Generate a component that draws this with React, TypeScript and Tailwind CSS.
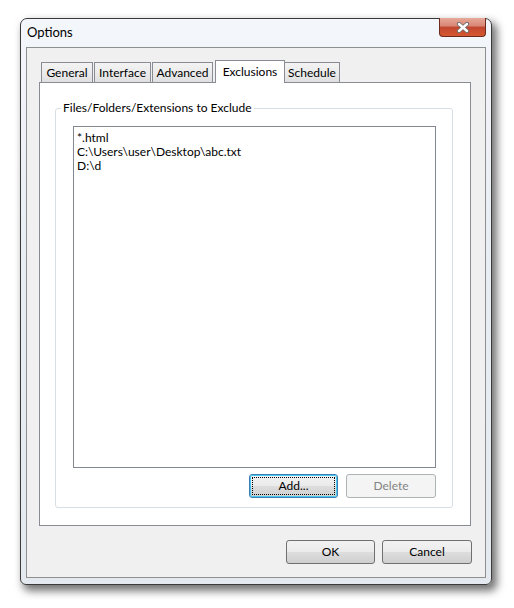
import React from "react";

const font = "font-['Lato','Liberation_Sans',sans-serif]";

const tabs = [
  { label: "General", w: "w-[52px]" },
  { label: "Interface", w: "w-[57px]" },
  { label: "Advanced", w: "w-[61px]" },
  { label: "Exclusions", w: "w-[70px]", active: true },
  { label: "Schedule", w: "w-[56px]" },
];

const files = ["*.html", "C:\\Users\\user\\Desktop\\abc.txt", "D:\\d"];

// vista style push button
const Button = ({
  label,
  w,
  focused,
  disabled,
}: {
  label: string;
  w: string;
  focused?: boolean;
  disabled?: boolean;
}) => {
  if (disabled) {
    return (
      <div
        className={`${w} h-[24px] flex items-center justify-center rounded-[3px] border border-[#adb2b5] bg-[#f4f4f4] text-[12px] text-[#838383]`}
      >
        {label}
      </div>
    );
  }
  return (
    <div
      className={`${w} h-[24px] relative flex items-center justify-center rounded-[3px] border ${
        focused ? "border-[#3c7fb1]" : "border-[#707070]"
      } bg-[linear-gradient(to_bottom,#f2f2f2_0%,#ebebeb_48%,#dddddd_52%,#cfcfcf_100%)] text-[12px] text-black`}
    >
      {focused && (
        <>
          <span className="absolute inset-0 rounded-[2px] border border-[#48c8f0]" />
          <span className="absolute inset-[2px] border border-dotted border-black" />
        </>
      )}
      <span className="relative">{label}</span>
    </div>
  );
};

const CloseGlyph = () => (
  <svg width="14" height="11" viewBox="0 0 14 11">
    <path d="M3 2 L11 9 M11 2 L3 9" stroke="#6b6b6b" strokeWidth="4.2" strokeLinecap="round" />
    <path d="M3 2 L11 9 M11 2 L3 9" stroke="#ffffff" strokeWidth="2.4" strokeLinecap="round" />
  </svg>
);

export default function App() {
  return (
    <div className={`w-[514px] h-[608px] bg-white pt-[18px] pl-[20px] ${font}`}>
      {/* window frame */}
      <div className="relative w-[472px] h-[567px] rounded-t-[7px] rounded-b-[6px] border border-[#3a3a3a] bg-[linear-gradient(to_bottom,#f3f6fa_0%,#e9eef4_40%,#e3e9ef_100%)] shadow-[4px_5px_9px_1px_rgba(0,0,0,0.55)] px-[5px] pb-[6px] flex flex-col">
        {/* title bar */}
        <div className="h-[28px] flex items-center pl-[1px] text-[13px] text-black">
          Options
        </div>
        <div className="absolute top-[-1px] right-[5px] w-[47px] h-[19px] rounded-b-[4px] border border-[#6e2a1f] border-t-0 bg-[linear-gradient(to_bottom,#e7a999_0%,#d98574_45%,#c24630_50%,#d4582f_100%)] flex items-center justify-center">
          <CloseGlyph />
        </div>

        {/* client area */}
        <div className="flex-1 border border-[#8e8f8f] bg-[#f0f0f0] px-[12px] pt-[12px] flex flex-col">
          {/* tab strip */}
          <div className="flex items-end h-[23px] pl-[2px] -mb-px">
            {tabs.map((t) =>
              t.active ? (
                <div
                  key={t.label}
                  className={`${t.w} h-[23px] relative z-10 -mr-px ml-px border border-b-0 border-[#898c95] bg-white text-[12px] text-black flex justify-center pt-[2px]`}
                >
                  {t.label}
                </div>
              ) : (
                <div
                  key={t.label}
                  className={`${t.w} h-[21px] mr-px border border-b-0 border-[#898c95] bg-[linear-gradient(to_bottom,#f3f3f3_0%,#ebebeb_50%,#dedede_100%)] text-[12px] text-black flex items-center justify-center`}
                >
                  {t.label}
                </div>
              )
            )}
          </div>

          {/* tab panel */}
          <div className="w-[432px] h-[444px] border border-[#898c95] bg-white pt-[25px] pl-[15px]">
            <div className="relative w-[398px] h-[400px] rounded-[3px] border border-[#d5dfe5] pt-[17px] pl-[17px]">
              <span className="absolute -top-[9px] left-[5px] bg-white px-[2px] text-[12px] text-black leading-[16px]">
                Files/Folders/Extensions to Exclude
              </span>
              <div className="w-[363px] h-[342px] border border-[#828790] bg-white pt-[4px] pl-[3px] text-[12px] leading-[14px] text-black">
                {files.map((f) => (
                  <div key={f}>{f}</div>
                ))}
              </div>
              <div className="w-[363px] mt-[6px] flex justify-end gap-[8px]">
                <Button label="Add..." w="w-[89px]" focused />
                <Button label="Delete" w="w-[90px]" disabled />
              </div>
            </div>
          </div>

          {/* dialog buttons */}
          <div className="mt-[14px] flex justify-end gap-[7px] pr-px">
            <Button label="OK" w="w-[89px]" />
            <Button label="Cancel" w="w-[90px]" />
          </div>
        </div>
      </div>
    </div>
  );
}
